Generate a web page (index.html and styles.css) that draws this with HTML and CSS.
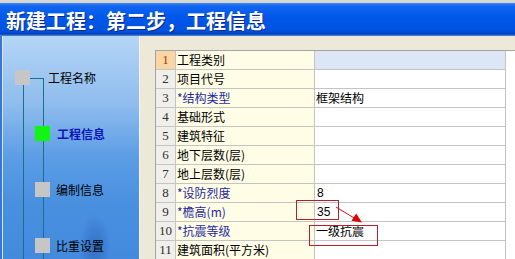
FILE: index.html
```html
<!DOCTYPE html>
<html lang="zh-CN">
<head>
<meta charset="utf-8">
<title>新建工程</title>
<link rel="stylesheet" href="styles.css">
</head>
<body>
<div class="window">
  <div class="titlebar">新建工程：第二步，工程信息</div>
  <div class="frame">
    <nav class="side">
      <ul class="tree">
        <li class="node first"><span class="box"></span><span class="label">工程名称</span></li>
        <li class="node current"><span class="box"></span><span class="label">工程信息</span></li>
        <li class="node"><span class="box"></span><span class="label">编制信息</span></li>
        <li class="node"><span class="box"></span><span class="label">比重设置</span></li>
      </ul>
    </nav>
    <main class="content">
      <div class="sheet">
        <table class="grid">
          <tr class="sel"><td class="num">1</td><td class="name">工程类别</td><td class="val"></td></tr>
          <tr><td class="num">2</td><td class="name">项目代号</td><td class="val"></td></tr>
          <tr><td class="num">3</td><td class="name req">*结构类型</td><td class="val">框架结构</td></tr>
          <tr><td class="num">4</td><td class="name">基础形式</td><td class="val"></td></tr>
          <tr><td class="num">5</td><td class="name">建筑特征</td><td class="val"></td></tr>
          <tr><td class="num">6</td><td class="name">地下层数(层)</td><td class="val"></td></tr>
          <tr><td class="num">7</td><td class="name">地上层数(层)</td><td class="val"></td></tr>
          <tr><td class="num">8</td><td class="name req">*设防烈度</td><td class="val latin">8</td></tr>
          <tr><td class="num">9</td><td class="name req">*檐高(m)</td><td class="val latin">35</td></tr>
          <tr><td class="num">10</td><td class="name req">*抗震等级</td><td class="val">一级抗震</td></tr>
          <tr><td class="num">11</td><td class="name">建筑面积(平方米)</td><td class="val"></td></tr>
        </table>
      </div>
    </main>
  </div>
  <svg class="marks" width="515" height="259" viewBox="0 0 515 259" aria-hidden="true">
    <rect x="296.5" y="200.5" width="42" height="19" fill="none" stroke="#b3202c" stroke-width="1"/>
    <rect x="309.5" y="225.5" width="68" height="20" fill="none" stroke="#b3202c" stroke-width="1"/>
    <line x1="336" y1="207" x2="355" y2="218.5" stroke="#d81010" stroke-width="1"/>
    <polygon points="362,222.5 351.5,220.8 356.2,213.6" fill="#e00000"/>
  </svg>
</div>
</body>
</html>
```

FILE: styles.css
```css
html, body {
  margin: 0;
  padding: 0;
  width: 515px;
  height: 259px;
  overflow: hidden;
}

body {
  font-family: "Noto Sans CJK SC", "Noto Sans", sans-serif;
  background: #d8d6d0;
}

.window {
  position: relative;
  height: 259px;
  padding-top: 3px;
  box-sizing: border-box;
  display: flex;
  flex-direction: column;
}

.titlebar {
  height: 33px;
  box-sizing: border-box;
  padding: 8px 0 0 6px;
  color: #ffffff;
  font-size: 20px;
  line-height: 20px;
  font-weight: 700;
  white-space: nowrap;
  text-shadow: 1px 1px 0 #0b2a8a;
  background: linear-gradient(#3f86f4 0, #1266f0 3px, #0058ea 40%, #0052e0 85%, #0040bc calc(100% - 2px), #5d8fd8 100%);
}

.frame {
  flex: 1;
  min-height: 0;
  display: flex;
  border-left: 2px solid #3a76d8;
}

.side {
  width: 136px;
  border-left: 1px solid #d6e8fa;
  border-right: 1px solid #f6f4ec;
  background:
    radial-gradient(16px 34px at 92px 212px, rgba(20, 60, 140, 0.35), rgba(20, 60, 140, 0)),
    linear-gradient(#b4d5f6 0, #8fbdee 30%, #5b9ce4 55%, #4a90e0 75%, #438ade 100%);
}

.tree {
  position: relative;
  list-style: none;
  margin: 0;
  padding: 34px 0 0 0;
  height: 100%;
  box-sizing: border-box;
}

.tree::before {
  content: "";
  position: absolute;
  left: 20px;
  top: 49px;
  bottom: 0;
  width: 1px;
  background: #1c6f86;
}

.tree::after {
  content: "";
  position: absolute;
  left: 40px;
  top: 42px;
  bottom: 0;
  width: 1px;
  background: #1c6f86;
}

.node {
  display: flex;
  align-items: center;
  height: 15px;
  margin: 0 0 41px 32px;
  gap: 6px;
  font-size: 12px;
  line-height: 15px;
  color: #000000;
  white-space: nowrap;
}

.node.first {
  margin-left: 12px;
  gap: 18px;
}

.box {
  position: relative;
  z-index: 1;
  width: 15px;
  height: 15px;
  flex: none;
  background: #c6c6c6;
}

.first .box::after {
  content: "";
  position: absolute;
  left: 15px;
  top: 8px;
  width: 13px;
  height: 1px;
  background: #1c6f86;
}

.current .box {
  background: #12f412;
}

.current .label {
  font-weight: 700;
  color: #0c16b8;
  margin-left: 1px;
}

.content {
  flex: 1;
  min-width: 0;
  background: #ece9d8;
  padding: 14px 0 0 15px;
}

.sheet {
  height: 100%;
  background: #ffffff;
  border-top: 1px solid #a4a4a4;
  border-left: 1px solid #a4a4a4;
}

.grid {
  border-collapse: separate;
  border-spacing: 0;
  table-layout: fixed;
  font-size: 12px;
}

.grid td {
  padding: 0;
  height: 18px;
  line-height: 18px;
  border-right: 1px solid #c4c4c4;
  border-bottom: 1px solid #c4c4c4;
  white-space: nowrap;
  overflow: hidden;
  color: #000000;
}

.grid .num {
  width: 19px;
  text-align: center;
  background: #f0efe9;
  color: #303030;
  font-family: "Liberation Serif", serif;
  font-size: 13px;
}

.grid .name {
  width: 137px;
  padding-left: 1px;
  background: #fffde6;
}

.grid .name.req {
  color: #1e2a9e;
}

.grid .val {
  width: 189px;
  padding-left: 1px;
  background: #ffffff;
}

.grid .val.latin {
  font-family: "Liberation Sans", sans-serif;
  padding-left: 2px;
  width: 188px;
}

.grid .sel .num {
  background: #fcd6a2;
  color: #a2381c;
}

.grid .sel .val {
  background: #dce6f4;
}

.marks {
  position: absolute;
  left: 0;
  top: 0;
  pointer-events: none;
}
```
